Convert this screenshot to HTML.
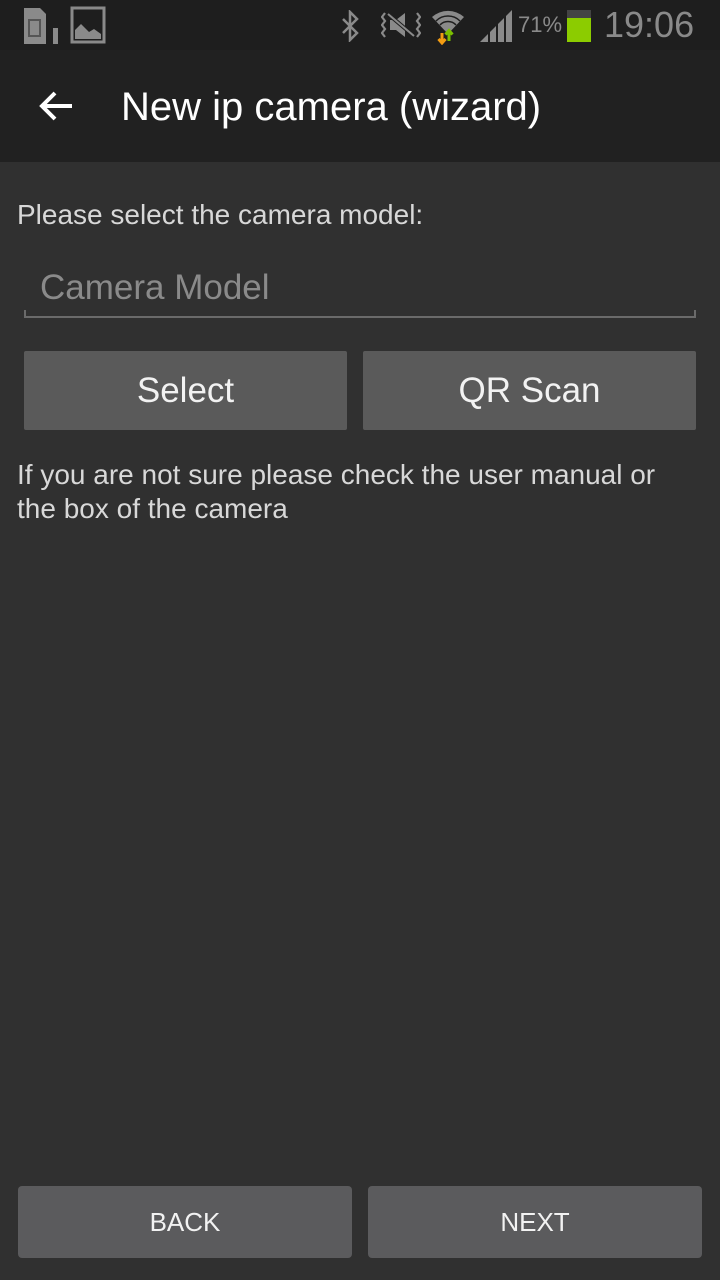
<!DOCTYPE html>
<html><head><meta charset="utf-8"><style>
*{margin:0;padding:0;box-sizing:border-box}
body{width:720px;height:1280px;background:#303030;font-family:"Liberation Sans",sans-serif;position:relative;overflow:hidden}
.abs{position:absolute}
#sb{left:0;top:0;width:720px;height:50px;background:#1e1e1e}
#tb{left:0;top:50px;width:720px;height:112px;background:#212121}
.btn{position:absolute;background:#5a5a5a;color:#f2f2f2;text-align:center;border-radius:2px}
</style></head><body>
<div id="sb" class="abs">
<svg class="abs" style="left:22px;top:6px" width="38" height="38" viewBox="0 0 38 38"><path d="M2 2h16l6 6v30H2z" fill="#8a8a8a"/><rect x="7" y="14" width="11" height="16" fill="none" stroke="#555" stroke-width="2"/><rect x="31" y="22" width="5" height="16" fill="#8a8a8a"/></svg>
<svg class="abs" style="left:70px;top:6px" width="38" height="38" viewBox="0 0 38 38"><rect x="2" y="2" width="32" height="34" fill="none" stroke="#8a8a8a" stroke-width="3"/><path d="M5 33V24l6-6 8 8 5-3 7 5v5z" fill="#8a8a8a"/></svg>
<svg class="abs" style="left:340px;top:10px" width="22" height="32" viewBox="0 0 22 32"><path d="M3 9l14 14-7 7V2l7 7L3 23" stroke="#8a8a8a" stroke-width="2.5" fill="none"/></svg>
<svg class="abs" style="left:381px;top:12px" width="40" height="26" viewBox="0 0 40 26"><path d="M4 1l-3 4 3 4-3 4 3 4-3 4 3 4M36 1l3 4-3 4 3 4-3 4 3 4-3 4" stroke="#8a8a8a" stroke-width="2.2" fill="none"/><path d="M9 8h6l9-7v24l-9-7H9z" fill="#8a8a8a"/><path d="M7 2l26 22" stroke="#1e1e1e" stroke-width="4"/><path d="M7 2l26 22" stroke="#8a8a8a" stroke-width="2"/></svg>
<svg class="abs" style="left:430px;top:7px" width="38" height="38" viewBox="0 0 38 38"><path d="M2 10a24 24 0 0 1 32 0L18 27z" fill="#8a8a8a"/><path d="M6 14a17 17 0 0 1 24 0M10 18a11 11 0 0 1 16 0" stroke="#1e1e1e" stroke-width="1.5" fill="none"/><path d="M12 26v10M8.5 32l3.5 4 3.5-4" stroke="#f39c12" stroke-width="3" fill="none"/><path d="M19 34V24M15.5 27.5l3.5-4 3.5 4" stroke="#7bc000" stroke-width="3" fill="none"/></svg>
<svg class="abs" style="left:480px;top:10px" width="34" height="32" viewBox="0 0 34 32"><path d="M0 32L8 24v8zM10 22l6-6v16h-6zM18 14l6-6v24h-6zM26 6l6-6v32h-6z" fill="#8a8a8a"/></svg>
<div class="abs" style="left:518px;top:12px;color:#8a8a8a;font-size:22px">71%</div>
<div class="abs" style="left:567px;top:10px;width:24px;height:32px;background:#444"></div>
<div class="abs" style="left:567px;top:18px;width:24px;height:24px;background:#8ccc00"></div>
<div class="abs" style="left:604px;top:4px;color:#8a8a8a;font-size:36px">19:06</div>
</div>
<div id="tb" class="abs">
<svg class="abs" style="left:38px;top:40px" width="36" height="32" viewBox="0 0 36 32"><path d="M34 16H4M17 3L4 16l13 13" stroke="#fff" stroke-width="4" fill="none"/></svg>
<div class="abs" style="left:121px;top:35px;color:#fff;font-size:40px">New ip camera (wizard)</div>
</div>
<div class="abs" style="left:17px;top:199px;color:#d8d8d8;font-size:28px">Please select the camera model:</div>
<div class="abs" style="left:40px;top:268px;color:#8a8a8a;font-size:35px">Camera Model</div>
<div class="abs" style="left:24px;top:316px;width:672px;height:2px;background:#6a6a6a"></div>
<div class="abs" style="left:24px;top:310px;width:2px;height:8px;background:#6a6a6a"></div>
<div class="abs" style="left:694px;top:310px;width:2px;height:8px;background:#6a6a6a"></div>
<div class="btn" style="left:24px;top:351px;width:323px;height:79px;line-height:79px;font-size:35px">Select</div>
<div class="btn" style="left:363px;top:351px;width:333px;height:79px;line-height:79px;font-size:35px">QR Scan</div>
<div class="abs" style="left:17px;top:458px;color:#d8d8d8;font-size:28px;line-height:34px;width:680px">If you are not sure please check the user manual or the box of the camera</div>
<div class="btn" style="left:18px;top:1186px;width:334px;height:72px;line-height:72px;font-size:26px;background:#5b5b5d;border-radius:4px">BACK</div>
<div class="btn" style="left:368px;top:1186px;width:334px;height:72px;line-height:72px;font-size:26px;background:#5b5b5d;border-radius:4px">NEXT</div>
</body></html>
